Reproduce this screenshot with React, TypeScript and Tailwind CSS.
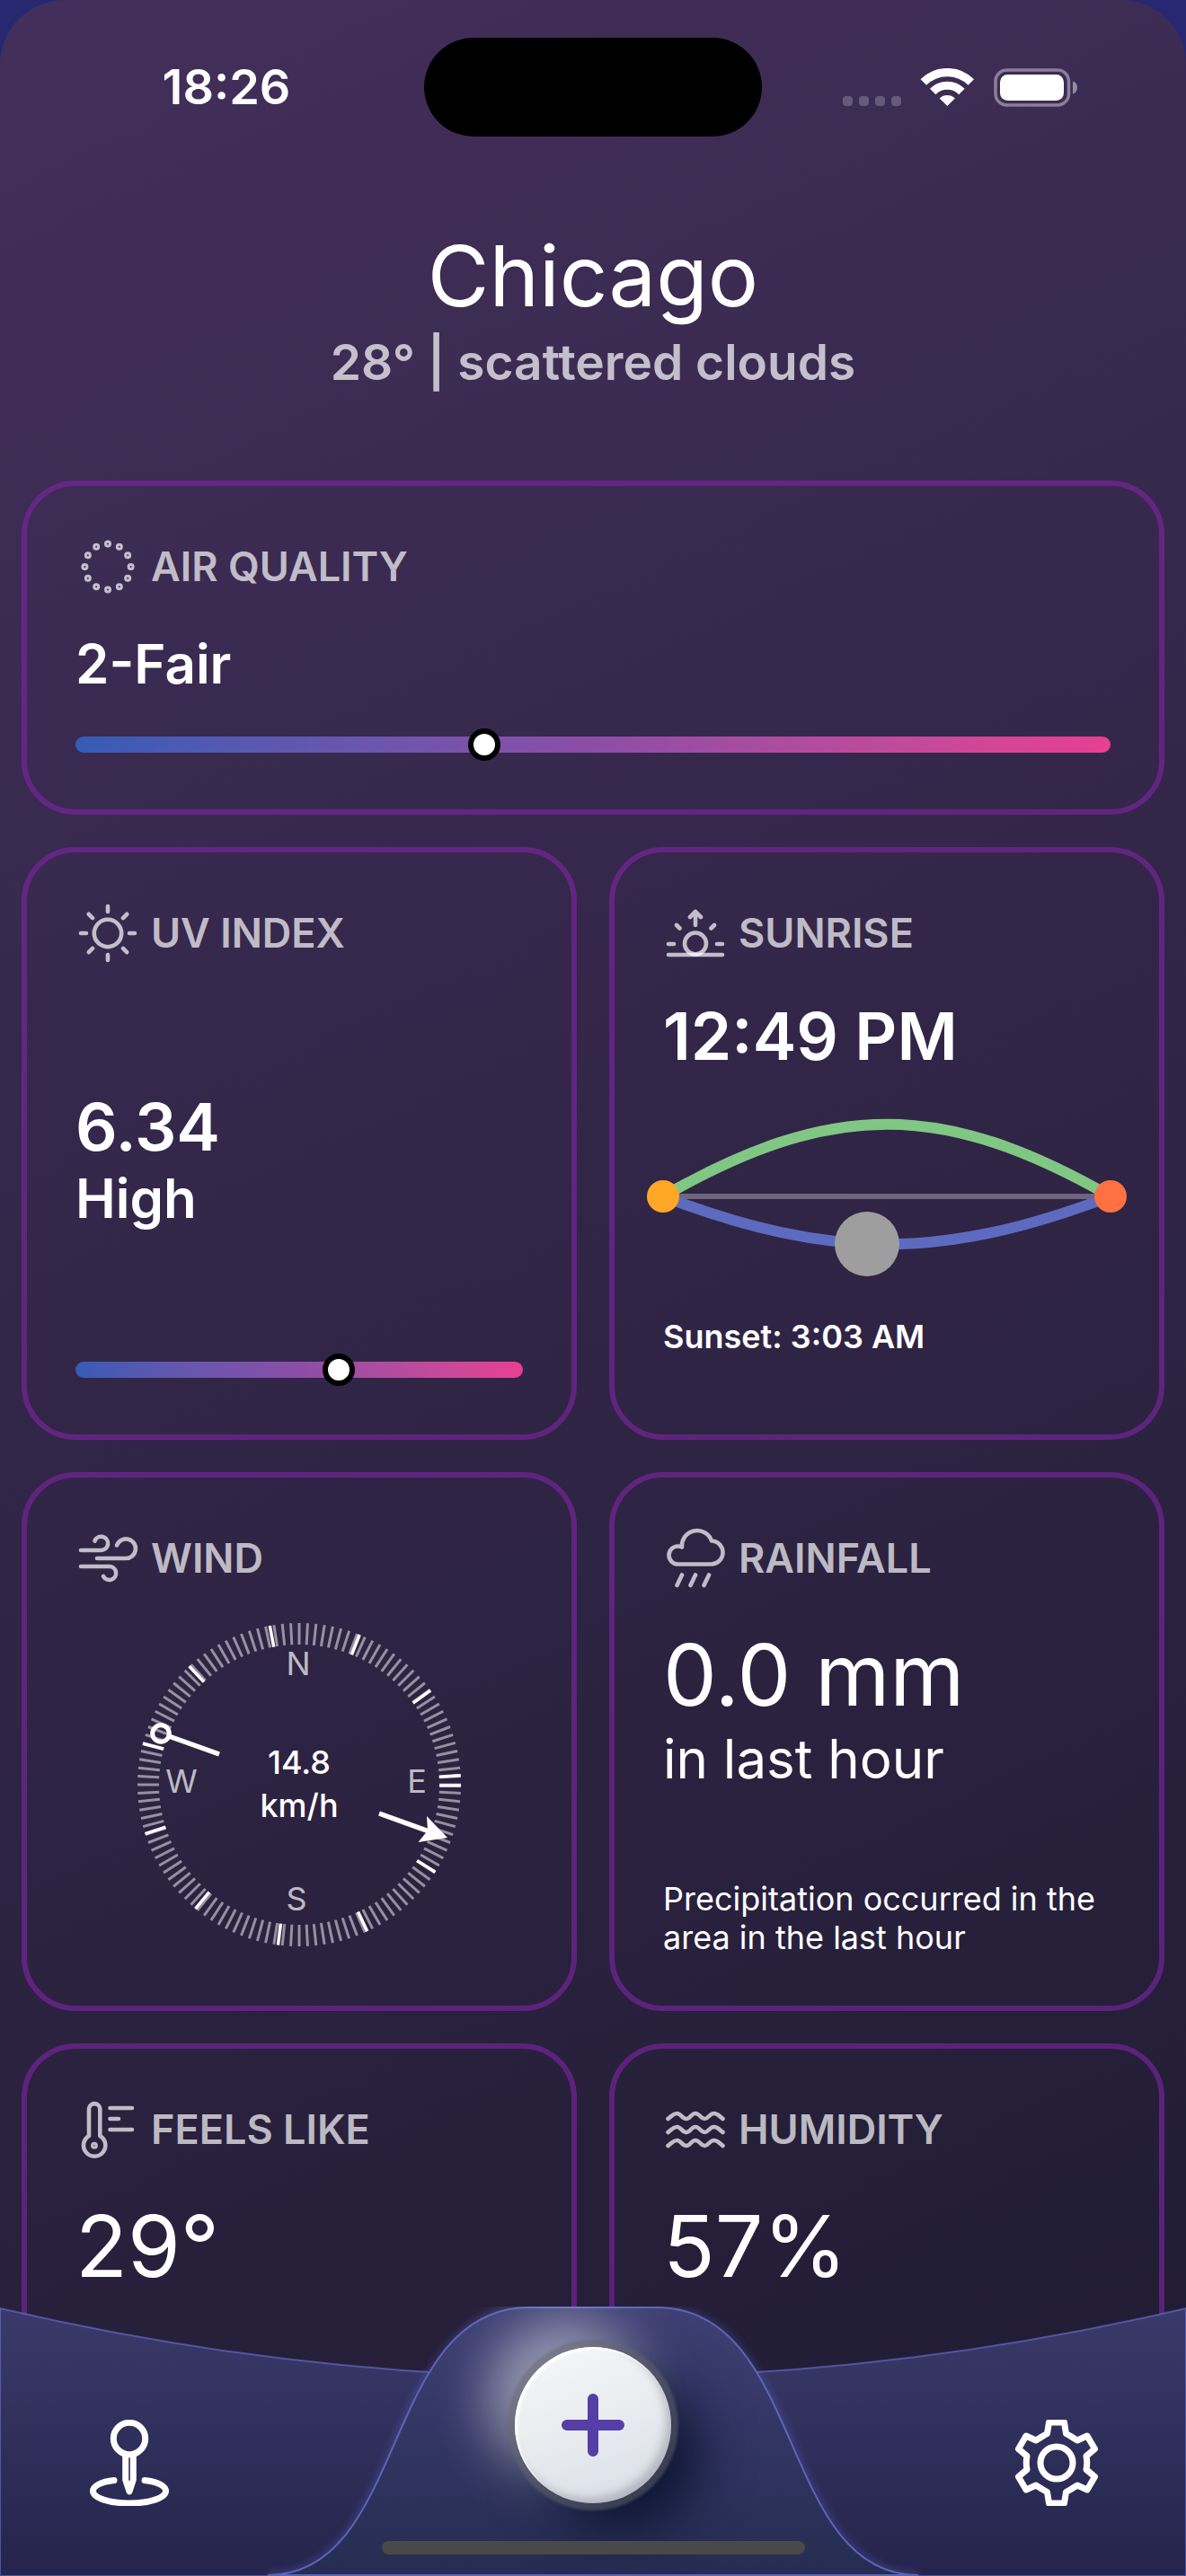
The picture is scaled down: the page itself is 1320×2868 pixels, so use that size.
import type { ReactNode } from "react";

function StatusIcons() {
  return (
    <svg width="261" height="43" viewBox="0 0 261 43" fill="none" aria-hidden="true">
      <g fill="#fff" fillOpacity="0.22">
        <rect x="0" y="31" width="11" height="11" rx="4" />
        <rect x="18" y="31" width="11" height="11" rx="4" />
        <rect x="36" y="31" width="11" height="11" rx="4" />
        <rect x="54" y="31" width="11" height="11" rx="4" />
      </g>
      <path d="M89.8 15.5A37.5 37.5 0 0 1 142.8 15.5" stroke="#fff" strokeWidth="9.2" />
      <path d="M100.2 25.9A22.8 22.8 0 0 1 132.4 25.9" stroke="#fff" strokeWidth="9.2" />
      <path d="M116.3 42L107.7 33.4A12.5 12.5 0 0 1 124.9 33.4Z" fill="#fff" />
      <rect x="170" y="2" width="81.500" height="39" rx="12.500" stroke="#fff" strokeOpacity="0.4" strokeWidth="3.500" />
      <rect x="175" y="7" width="71" height="29" rx="8.500" fill="#fff" />
      <path d="M256 14.500C259.500 15.500 261 18.500 261 21.500S259.500 27.500 256 28.500Z" fill="#fff" fillOpacity="0.45" />
    </svg>
  );
}

const orbit = Array.from({ length: 12 }, (_, i) => (i * Math.PI) / 6);
const rays = [0, 45, 90, 135, 180, 225, 270, 315];

const icons: Record<string, ReactNode> = {
  air: (
    <g strokeWidth="3">
      {orbit.map((a) => (
        <circle key={a} cx={25.6 * Math.cos(a)} cy={25.6 * Math.sin(a)} r="2.5" />
      ))}
    </g>
  ),
  uv: (
    <g>
      <circle r="15.200" />
      {rays.map((r) => (
        <path key={r} d="M0 -24V-30" transform={`rotate(${r})`} />
      ))}
    </g>
  ),
  sunrise: (
    <g>
      <path d="M-30 24H30M-30 12H-24M24 12H30M-21 -9L-17.500 -5.500M21 -9L17.500 -5.500" />
      <circle cy="11.500" r="12" />
      <path d="M0 -9V-24M-6 -18L0 -24L6 -18" />
    </g>
  ),
  wind: (
    <path d="M-30 -9H-7.500A7.600 7.600 0 1 0 -14.500 -19.500M-12 0H19.800A10.800 10.800 0 1 0 10 -14.500M-30 9H1.500A7.500 7.500 0 1 1 -5 20" />
  ),
  rain: (
    <path d="M-19.500 6.500A10 10 0 0 1 -19.500 -13.500Q-17 -13.500 -15 -12.500A17 17 0 0 1 18 -19.500A13 13 0 0 1 17 6.500ZM-15 18.500L-20.500 30M0 18.500L-5.500 30M15 18.500L9.500 30" />
  ),
  feels: (
    <g>
      <path d="M-21 7V-23.500A6.200 6.200 0 0 1 -8.700 -23.500V7A12.200 12.200 0 1 1 -21 7Z" />
      <circle cx="-15" cy="17.700" r="2.300" strokeWidth="3.200" />
      <path d="M2.500 -24H27M2.500 -12H12M2.500 0H27" />
    </g>
  ),
  humidity: (
    <g>
      {[-15, 0, 15].map((y) => (
        <path
          key={y}
          transform={`translate(0 ${y})`}
          d="M-30.500 3C-26 0 -25 -3 -20.500 -3S-15 3 -10.200 3S-5 -3 0 -3S5.500 3 10.200 3S15.500 -3 20.500 -3S26 0 30.500 3"
        />
      ))}
    </g>
  ),
};

function Card({ icon, title, className, children }: { icon: string; title: string; className: string; children?: ReactNode }) {
  return (
    <section className={`flex flex-col gap-9 rounded-[60px] border-[6px] border-[#8024a6]/60 p-[54px] ${className}`}>
      <h2 className="flex items-center gap-3 text-[45px] leading-[72px] font-semibold text-white/70">
        <svg
          width="72"
          height="72"
          viewBox="-36 -36 72 72"
          fill="none"
          stroke="currentColor"
          strokeWidth="4.600"
          strokeLinecap="round"
          strokeLinejoin="round"
          aria-hidden="true"
        >
          {icons[icon]}
        </svg>
        {title}
      </h2>
      {children}
    </section>
  );
}

function Gauge({ label, value }: { label: string; value: number }) {
  return (
    <input
      type="range"
      aria-label={label}
      min="0"
      max="100"
      step="any"
      defaultValue={value}
      className="block h-9 w-full appearance-none bg-transparent [&::-webkit-slider-runnable-track]:h-[18px] [&::-webkit-slider-runnable-track]:rounded-[9px] [&::-webkit-slider-runnable-track]:bg-linear-to-r [&::-webkit-slider-runnable-track]:from-[#355bb5] [&::-webkit-slider-runnable-track]:via-[#8b4da6] [&::-webkit-slider-runnable-track]:to-[#e83f92] [&::-webkit-slider-thumb]:-mt-[9px] [&::-webkit-slider-thumb]:size-9 [&::-webkit-slider-thumb]:appearance-none [&::-webkit-slider-thumb]:rounded-full [&::-webkit-slider-thumb]:border-[6px] [&::-webkit-slider-thumb]:border-black [&::-webkit-slider-thumb]:bg-white"
    />
  );
}

function SunPath() {
  return (
    <svg viewBox="0 0 498 198" className="w-full overflow-visible" fill="none" aria-hidden="true">
      <path d="M0 99H498" stroke="#fff" strokeOpacity="0.3" strokeWidth="6" />
      <path d="M0 99C187 -8 311 -8 498 99" stroke="#81c784" strokeWidth="12" />
      <path d="M0 99C187 170 311 170 498 99" stroke="#5c6bc0" strokeWidth="12" />
      <circle cx="0" cy="99" r="18" fill="#ffa726" />
      <circle cx="498" cy="99" r="18" fill="#ff7043" />
      <circle cx="227" cy="152" r="36" fill="#9e9e9e" />
    </svg>
  );
}

function Compass() {
  return (
    <svg width="360" height="360" viewBox="-180 -180 360 360" className="self-center" role="img" aria-label="Wind 14.8 km/h">
      <g stroke="#fff" strokeOpacity="0.5" strokeWidth="3">
        {Array.from({ length: 120 }, (_, i) => (
          <path key={i} d="M156 0H180" transform={`rotate(${i * 3})`} />
        ))}
      </g>
      <g stroke="#fff" strokeWidth="3.500">
        {Array.from({ length: 12 }, (_, i) => (
          <path key={i} d="M156 1H180" transform={`rotate(${i * 32.4})`} />
        ))}
      </g>
      <g stroke="#fff" fill="none">
        <circle cx="-154" cy="-57" r="9.300" strokeWidth="5" />
        <path d="M-145 -54L-89 -34M89 32L150 54" strokeWidth="5.500" />
      </g>
      <path d="M165 59L142 35L143 51L132.500 64Z" fill="#fff" />
      <g textAnchor="middle" fontSize="36" fill="#fff">
        <g fillOpacity="0.7">
          <text x="-1" y="-122">N</text>
          <text x="-131" y="9">W</text>
          <text x="131" y="9">E</text>
          <text x="-3" y="140">S</text>
        </g>
        <g fontWeight="500">
          <text y="-12">14.8</text>
          <text y="36">km/h</text>
        </g>
      </g>
    </svg>
  );
}

function TabBar() {
  return (
    <nav className="fixed inset-x-0 bottom-0 h-[300px] overflow-hidden">
      <svg viewBox="0 0 1320 300" preserveAspectRatio="none" className="absolute inset-0 size-full" fill="none" aria-hidden="true">
        <defs>
          <linearGradient id="bar" x1="0" y1="0" x2="0" y2="1">
            <stop stopColor="#3a3a6a" />
            <stop offset="1" stopColor="#25244c" />
          </linearGradient>
        </defs>
        <path d="M0 2Q660 156 1320 2V300H0Z" fill="url(#bar)" stroke="#7582f4" strokeOpacity="0.5" strokeWidth="2" />
      </svg>
      <svg width="724" height="300" viewBox="0 0 724 300" className="absolute inset-x-0 mx-auto overflow-visible" fill="none" aria-hidden="true">
        <defs>
          <linearGradient id="hump" x1="0" y1="0" x2="0" y2="1">
            <stop stopColor="#3e3f74" />
            <stop offset="1" stopColor="#262c51" />
          </linearGradient>
          <filter id="glow" x="-10%" y="-10%" width="120%" height="120%">
            <feGaussianBlur stdDeviation="4" />
          </filter>
        </defs>
        <path d="M0 299C156 299 126 1 291 1H433C598 1 568 299 724 299" stroke="#6a6ae0" strokeOpacity="0.4" strokeWidth="5" filter="url(#glow)" />
        <path d="M0 299C156 299 126 1 291 1H433C598 1 568 299 724 299Z" fill="url(#hump)" stroke="#5a66b8" strokeWidth="2" />
      </svg>
      <div className="relative flex h-full items-start justify-between px-24">
        <button type="button" aria-label="My location" className="mt-[126px] text-white">
          <svg width="96" height="96" viewBox="-48 -48 96 96" fill="none" stroke="currentColor" strokeWidth="7" strokeLinecap="round" strokeLinejoin="round">
            <circle cy="-27" r="17.700" />
            <path d="M-4.300 -9V19L0 32L4.300 19V-9" />
            <path d="M-17 19.500C-32 21 -40.500 26 -40.500 31.500C-40.500 39 -22 45 0 45S40.500 39 40.500 31.500C40.500 26 32 21 17 19.500" />
          </svg>
        </button>
        <button
          type="button"
          aria-label="Add city"
          className="mt-[45px] rounded-full shadow-[0_0_3px_8px_rgba(104,104,110,0.5),30px_30px_60px_#0d1431,-30px_-30px_60px_rgba(255,255,255,0.5)]"
        >
          <span className="flex size-[174px] items-center justify-center rounded-full bg-linear-160 from-[#f7f7fb] via-[#e9ebef] to-[#d8dde8] shadow-[inset_3px_3px_3px_#fff,inset_-6px_-6px_10px_rgba(100,105,115,0.35)]">
            <svg width="72" height="72" viewBox="-36 -36 72 72" stroke="#533fa5" strokeWidth="12" strokeLinecap="round">
              <path d="M-29 0H29M0 -29V29" />
            </svg>
          </span>
        </button>
        <button type="button" aria-label="Settings" className="mt-[126px] text-white">
          <svg width="96" height="96" viewBox="-48 -48 96 96" fill="none" stroke="currentColor" strokeWidth="7" strokeLinecap="round" strokeLinejoin="round">
            <circle r="18" />
            <path d="M-8.500 -45H8.500L10.500 -32.500L15 -30L23 -25L34 -30L42.500 -15.500L33 -7.500Q34.500 0 33 7.500L42.500 15.500L34 30L23 25L15 30L10.500 32.500L8.500 45H-8.500L-10.500 32.500L-15 30L-23 25L-34 30L-42.500 15.500L-33 7.500Q-34.500 0 -33 -7.500L-42.500 -15.500L-34 -30L-23 -25L-15 -30L-10.500 -32.500Z" />
          </svg>
        </button>
      </div>
      <div className="absolute inset-x-0 bottom-6 mx-auto h-[15px] w-[471px] rounded-full bg-[#494949]" />
    </nav>
  );
}

export default function App() {
  return (
    <div className="min-h-screen bg-[#272772] font-[Inter,sans-serif] text-white">
      <div className="min-h-screen rounded-t-[72px] bg-[linear-gradient(155deg,#432f5b,#1e1b31)]">
        <header>
          <div className="grid grid-cols-[1fr_376px_1fr] items-center pt-[42px]">
            <time className="pl-8 text-center text-[54px] leading-[72px] font-semibold">18:26</time>
            <div className="h-[110px] rounded-full bg-black" />
            <div className="flex justify-center pr-8">
              <StatusIcons />
            </div>
          </div>
          <div className="mt-24 text-center">
            <h1 className="text-[94px] leading-[119px]">Chicago</h1>
            <p className="text-[55px] leading-[72px] font-semibold text-white/70">28° | scattered clouds</p>
          </div>
        </header>
        <main className="mt-24 grid grid-cols-2 gap-9 px-6 pb-24">
          <Card icon="air" title="AIR QUALITY" className="col-span-2">
            <p className="text-[60px] leading-[72px] font-semibold">2-Fair</p>
            <Gauge label="Air quality" value={39.2} />
          </Card>
          <Card icon="uv" title="UV INDEX" className="min-h-[660px] justify-between">
            <div className="font-semibold">
              <p className="text-[73px] leading-[86px]">6.34</p>
              <p className="text-[60px] leading-[72px]">High</p>
            </div>
            <Gauge label="UV index" value={59.5} />
          </Card>
          <Card icon="sunrise" title="SUNRISE" className="min-h-[660px]">
            <p className="text-[73px] leading-[86px] font-semibold">12:49 PM</p>
            <SunPath />
            <p className="text-[36px] leading-[43px] font-semibold">Sunset: 3:03 AM</p>
          </Card>
          <Card icon="wind" title="WIND" className="min-h-[600px]">
            <Compass />
          </Card>
          <Card icon="rain" title="RAINFALL" className="min-h-[600px]">
            <div>
              <p className="text-[95px] leading-[115px]">0.0 mm</p>
              <p className="text-[60px] leading-[72px]">in last hour</p>
            </div>
            <p className="mt-auto text-[36px] leading-[43px]">Precipitation occurred in the area in the last hour</p>
          </Card>
          <Card icon="feels" title="FEELS LIKE" className="min-h-[440px]">
            <p className="text-[95px] leading-[115px]">29°</p>
          </Card>
          <Card icon="humidity" title="HUMIDITY" className="min-h-[440px]">
            <p className="text-[95px] leading-[115px]">57%</p>
          </Card>
        </main>
      </div>
      <TabBar />
    </div>
  );
}
